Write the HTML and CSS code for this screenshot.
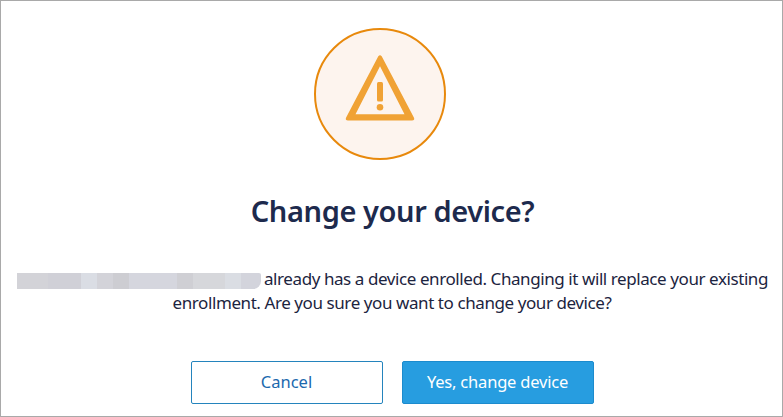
FILE: index.html
```
<!DOCTYPE html>
<html lang="en">
<head>
<meta charset="utf-8">
<title>Change your device?</title>
<link rel="stylesheet" href="styles.css">
</head>
<body>
<main class="dialog">
  <svg class="warning" width="132" height="132" viewBox="0 0 132 132" aria-hidden="true">
    <circle class="ring" cx="66" cy="66" r="65"/>
    <path class="triangle" fill-rule="evenodd" d="M64.300 28.300 Q66 26 67.700 28.300 L100 89.800 Q101 92.500 98 92.500 H34 Q31 92.500 32 89.800 Z M66 38.300 L41.500 86.300 H90.500 Z"/>
    <rect class="mark" x="63" y="54" width="6" height="19.500" rx="1.500"/>
    <circle class="mark" cx="66" cy="79.200" r="3.300"/>
  </svg>
  <h1 class="title">Change your device?</h1>
  <div class="message">
    <p class="line first"><span class="redacted"></span><span>already has a device enrolled. Changing it will replace your existing</span></p>
    <p class="line second"><span>enrollment. Are you sure you want to change your device?</span></p>
  </div>
  <div class="actions">
    <button class="button cancel">Cancel</button>
    <button class="button confirm">Yes, change device</button>
  </div>
</main>
</body>
</html>
```
FILE: styles.css
```
* { box-sizing: border-box; }
body { margin: 0; font-family: "Noto Sans", sans-serif; color: #1c2440; }
.dialog {
  width: 783px; height: 417px; padding-top: 27px;
  border: 1px solid #a9a9a9; background: #fff; overflow: hidden;
  display: flex; flex-direction: column; align-items: center;
}
.warning { display: block; flex: none; margin-right: 23px; }
.ring { fill: #fdf4ee; stroke: #e8890c; stroke-width: 2; }
.triangle, .mark { fill: #f0a235; }
.title {
  margin: 31px 0 0 2px; height: 40px; line-height: 40px; color: #1d2a4d;
  font-size: 29px; font-weight: 600; letter-spacing: -0.4px; white-space: nowrap;
}
.message { margin: 36px 0 0 2px; width: 751px; }
.line {
  margin: 0; height: 24px; line-height: 24px; font-size: 17px;
  letter-spacing: -0.42px; white-space: nowrap;
  display: flex; justify-content: center; align-items: center;
}
.first { justify-content: flex-start; gap: 3px; }
.second { padding-right: 1px; }
.redacted {
  width: 244px; height: 16px; flex: none; margin-top: 4px; border-radius: 0 2px 8px 0;
  background: linear-gradient(90deg, #d3d3d8 31px, #d0d0d7 31px 64px, #dadde4 64px 80px, #d3d3d9 80px 96px, #cdcdd2 96px 112px, #d5d6de 112px 160px, #cfcfd4 160px 176px, #d6d7db 176px 208px, #dadde3 208px 224px, #d3d4dc 224px);
}
.actions { display: flex; gap: 19px; margin: 46px 0 0 1px; }
.button {
  width: 192px; height: 43px; padding: 0 0 2px; border: 1px solid #2484bd; border-radius: 2px;
  background: #fff; color: #1b69ae; font: 16.5px/38px "Noto Sans", sans-serif; letter-spacing: -0.2px;
}
.cancel { letter-spacing: 0; }
.confirm { background: #279de0; border-color: #1c8bcd; color: #fff; }
```
